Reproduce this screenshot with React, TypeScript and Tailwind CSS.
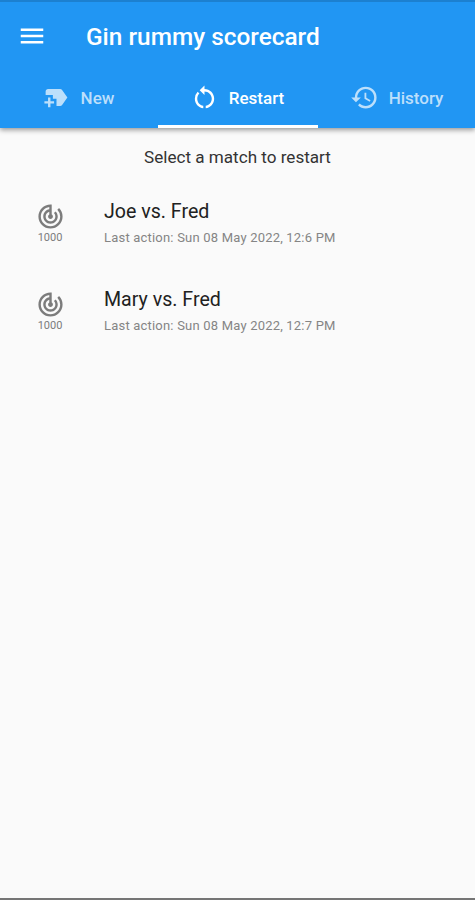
import { useState } from 'react';
import { MdMenu, MdNewLabel, MdRestartAlt, MdHistory, MdTrackChanges } from 'react-icons/md';

const tabs = [
  { label: 'New', icon: MdNewLabel, spacing: 'w-[158px] gap-[10px] pr-[2px]' },
  { label: 'Restart', icon: MdRestartAlt, spacing: 'w-[160px] gap-[10px] pr-[2px]' },
  { label: 'History', icon: MdHistory, spacing: 'w-[157px] gap-[10px]' },
];

const matches = [
  { players: 'Joe vs. Fred', target: 1000, lastAction: 'Sun 08 May 2022, 12:6 PM' },
  { players: 'Mary vs. Fred', target: 1000, lastAction: 'Sun 08 May 2022, 12:7 PM' },
];

export default function App() {
  const [active, setActive] = useState('Restart');

  return (
    <div className="flex h-[900px] w-full flex-col overflow-hidden border-b-2 border-[#757575] bg-[#fafafa] font-['Roboto',sans-serif]">
      <header className="relative h-32 shrink-0 border-t-2 border-[#1c80d0] bg-[#2196f3] shadow-[0_2px_5px_rgba(0,0,0,0.4)]">
        <div className="flex h-[68px] items-center pl-[17px] text-white">
          <button title="Menu">
            <MdMenu className="size-[30px]" />
          </button>
          <h1 className="ml-[39px] pt-[2px] text-[24.4px] font-medium whitespace-nowrap">Gin rummy scorecard</h1>
        </div>
        {/* Tabs */}
        <nav className="flex h-[58px]">
          {tabs.map(({ label, icon: Icon, spacing }) => (
            <button
              key={label}
              onClick={() => setActive(label)}
              className={`flex items-center justify-center border-b-3 text-[17px] font-medium ${spacing} ${
                active === label ? 'border-white text-white' : 'border-transparent text-[#bcdffb]'
              }`}
            >
              <Icon className="size-[29px]" />
              <span className="pt-[2px]">{label}</span>
            </button>
          ))}
        </nav>
      </header>
      <main className="flex flex-col">
        <p className="mt-[17px] text-center text-[17.1px] leading-6 text-[#333333]">Select a match to restart</p>
        {/* Saved matches */}
        <ul className="mt-[11px]">
          {matches.map((match) => (
            <li key={match.players} className="flex h-[88px] items-center">
              <div className="flex w-[104px] flex-col items-center pr-1 pb-[3px] text-[#7c7c7c]">
                <MdTrackChanges className="size-[29px]" />
                <span className="mt-px text-[11px] leading-3">{match.target}</span>
              </div>
              <div>
                <div className="text-[19.6px] leading-7 text-[#212121]">{match.players}</div>
                <div className="text-[13px] leading-6 tracking-[0.2px] text-[#858585]">Last action: {match.lastAction}</div>
              </div>
            </li>
          ))}
        </ul>
      </main>
    </div>
  );
}
